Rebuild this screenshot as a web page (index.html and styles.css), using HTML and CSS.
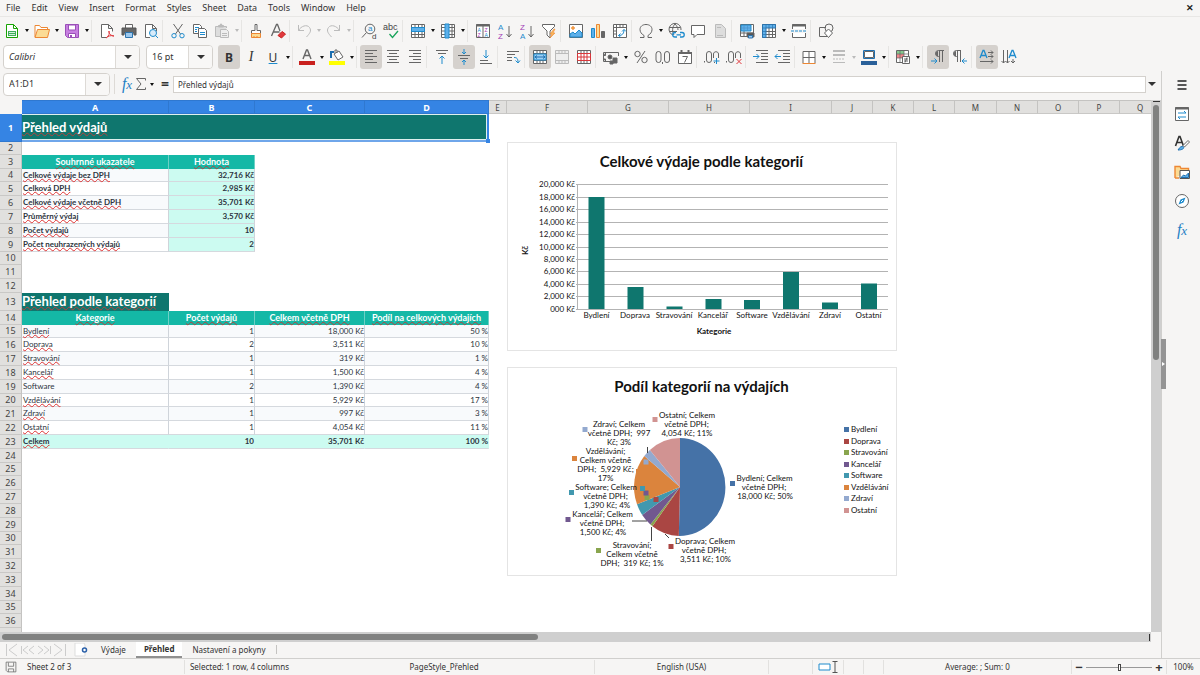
FILE: index.html
```html
<!DOCTYPE html>
<html lang="cs">
<head>
<meta charset="utf-8">
<title>Přehled výdajů</title>
<link rel="stylesheet" href="styles.css">
</head>
<body>
<nav class="menubar">
  <button>File</button><button>Edit</button><button>View</button><button>Insert</button><button>Format</button><button>Styles</button><button>Sheet</button><button>Data</button><button>Tools</button><button>Window</button><button>Help</button>
  <button class="close" aria-label="Close">✕</button>
</nav>

<div class="toolbar" role="toolbar" aria-label="Standard">
  <button class="tool" aria-label="New"><svg viewBox="0 0 16 16"><path d="M2.500 1.500h7l4 4v9h-11z" fill="#fff" stroke="#18a303"/><path d="M9.500 1.500v4h4" stroke="#18a303"/><path d="M4 8h8v5h-8z" fill="#3fae5c" stroke="none"/><path d="M5 9.500h6M5 11.500h6" stroke="#d5f0dc"/></svg></button><button class="drop" aria-label="New options"></button>
  <button class="tool" aria-label="Open"><svg viewBox="0 0 16 16"><path d="M1 14V2.500h4.500l1.500 2h6.500V7" fill="#fff" stroke="#ed8733"/><path d="M1 14.500 3.500 6.500h12l-2 8z" fill="#fbdb95" stroke="#ed8733"/></svg></button><button class="drop" aria-label="Open options"></button>
  <button class="tool" aria-label="Save"><svg viewBox="0 0 16 16"><path d="M1.500 1.500h13v13h-11l-2-2z" fill="#c77fe0" stroke="#9a4fb8"/><path d="M4.500 2h7v5h-7zM4.500 10.500h7v4h-7z" fill="#fff" stroke="#9a4fb8"/><path d="M6 12h2v2h-2z" fill="#9a4fb8" stroke="none"/></svg></button><button class="drop" aria-label="Save options"></button>
  <span class="sep"></span>
  <button class="tool" aria-label="Export as PDF"><svg viewBox="0 0 16 16"><path d="M7 14.500H2.500v-13h7l4 4v3M9.500 1.500v4h4" fill="#fff"/><path d="M7 15c3-2 4-5 3-7-1 2 2 5 5 5-3-1-6 0-8 2" stroke="#e0393e"/></svg></button>
  <button class="tool" aria-label="Print"><svg viewBox="0 0 16 16"><path d="M4.500 5V1.500h7V5" fill="#fff"/><path d="M1 5h14v7h-2v-2h-10v2h-2z" fill="#666" stroke="#555"/><path d="M4.500 9.500h7v5h-7z" fill="#9cc8ee" stroke="#2c73ac"/></svg></button>
  <button class="tool" aria-label="Print Preview"><svg viewBox="0 0 16 16"><path d="M7 14.500H2.500v-13h7l4 4v3M9.500 1.500v4h4" fill="#fff"/><circle cx="10" cy="10" r="3.500" fill="#d8ebfa" stroke="#1e8bcd"/><path d="M12.500 12.500 15 15" stroke="#1e8bcd"/></svg></button>
  <span class="sep"></span>
  <button class="tool" aria-label="Cut"><svg viewBox="0 0 16 16"><path d="M3.500 1 10.500 11M12.500 1 5.500 11"/><circle cx="4" cy="12.700" r="2.200" stroke="#1e8bcd"/><circle cx="12" cy="12.700" r="2.200" stroke="#1e8bcd"/></svg></button>
  <button class="tool" aria-label="Copy"><svg viewBox="0 0 16 16"><path d="M1.500 1.500h6l2 2v7h-8z" fill="#fff"/><path d="M6.500 5.500h6l2 2v7h-8z" fill="#fff"/><path d="M3 4.500h4M3 6.500h2M3 8.500h2M8 9.500h5M8 11.500h5" stroke="#1e8bcd"/></svg></button>
  <button class="tool off" aria-label="Paste"><svg viewBox="0 0 16 16"><path d="M12.500 5V3.500h-11v10h5" fill="#ddd"/><path d="M4.500 4V2.500h1.500l.5-1.500h1l.5 1.500h1.500V4z" fill="#bbb"/><path d="M6.500 6.500h6l2 2v6h-8zM8 10.500h5M8 12.500h5" fill="#eee"/></svg></button><button class="drop off" aria-label="Paste options"></button>
  <span class="sep tight"></span>
  <button class="tool" aria-label="Clone Formatting"><svg viewBox="0 0 16 16"><path d="M7 1.500h2v6h3.500v3h-9v-3H7z" fill="#fff"/><path d="M3.500 10.500h9v4h-9z" fill="#fbdb95" stroke="#ed8733"/><path d="M6 13v1.500M9 13v1.500" stroke="#ed8733"/></svg></button>
  <button class="tool" aria-label="Clear Direct Formatting"><svg viewBox="0 0 16 16"><path d="M1.500 13 6.500 1.500h1L10 8M3.500 9h6" stroke-width="1.300"/><path d="m8 12.500 4-4 3.500 2.500-4 4z" fill="#e0393e" stroke="#c9211e"/></svg></button>
  <span class="sep tight"></span>
  <button class="tool off" aria-label="Undo"><svg viewBox="0 0 16 16"><path d="M2.500 2v5.500H8M2.500 7.500C5 3 11 1 13.500 4.500s0 6-3 9.500"/></svg></button><button class="drop off" aria-label="Undo options"></button>
  <button class="tool off" aria-label="Redo"><svg viewBox="0 0 16 16"><path d="M13.500 2v5.500H8M13.500 7.500C11 3 5 1 2.500 4.500s0 6 3 9.500"/></svg></button><button class="drop off" aria-label="Redo options"></button>
  <span class="sep"></span>
  <button class="tool" aria-label="Find and Replace"><svg viewBox="0 0 16 16"><circle cx="9" cy="6" r="4.800"/><path d="M5.500 9.500 1 14.500"/><text x="7" y="8" class="g blue">a</text><text x="11" y="16" class="g">d</text></svg></button>
  <button class="tool" aria-label="Spelling"><svg viewBox="0 0 16 16"><text x="0" y="7" class="g abc">abc</text><path d="m6.500 11 3 3.500 5.500-6.500" stroke="#18a35a" stroke-width="1.300"/></svg></button>
  <span class="sep"></span>
  <button class="tool" aria-label="Row"><svg viewBox="0 0 16 16"><path d="M1.500 1.500h13v13h-13zM1.500 11.500h13M5 1.500v13M8.500 1.500v13M12 1.500v13" fill="#fff"/><path d="M1.500 4.500h13v4h-13z" fill="#5eb0ea" stroke="#1e8bcd"/></svg></button><button class="drop" aria-label="Row options"></button>
  <button class="tool" aria-label="Column"><svg viewBox="0 0 16 16"><path d="M1.500 1.500h13v13h-13zM1.500 4.500h13M1.500 8h13M1.500 11.500h13M12 1.500v13" fill="#fff"/><path d="M5 1h4v14H5z" fill="#5eb0ea" stroke="#1e8bcd"/></svg></button><button class="drop" aria-label="Column options"></button>
  <span class="sep"></span>
  <button class="tool" aria-label="Sort"><svg viewBox="0 0 16 16"><path d="M1.500 1.500h13v13h-13zM8 1.500v13" fill="#fff"/><path d="M1 2.500h14" stroke-width="2"/><text x="2.500" y="8.500" class="g tiny blue">A</text><text x="2.500" y="14" class="g tiny pink">Z</text><text x="9.500" y="8.500" class="g tiny pink">Z</text><text x="9.500" y="14" class="g tiny blue">A</text></svg></button>
  <button class="tool" aria-label="Sort Ascending"><svg viewBox="0 0 16 16"><text x="1" y="6.500" class="g az blue">A</text><text x="1" y="15.500" class="g az pink">Z</text><path d="M12 3v11M9.500 11l2.500 3 2.500-3"/></svg></button>
  <button class="tool" aria-label="Sort Descending"><svg viewBox="0 0 16 16"><text x="1" y="6.500" class="g az pink">Z</text><text x="1" y="15.500" class="g az blue">A</text><path d="M12 3v11M9.500 11l2.500 3 2.500-3"/></svg></button>
  <button class="tool" aria-label="AutoFilter"><svg viewBox="0 0 16 16"><path d="M1.500 1.500h12v2L9 8v7l-3-3V8L1.500 3.500z" fill="#fff"/><path d="M13 6 9 11h2l-2 4 5-5h-2l2-4z" fill="#fbb95a" stroke="#ed8733" stroke-width=".6"/></svg></button>
  <span class="sep"></span>
  <button class="tool" aria-label="Insert Image"><svg viewBox="0 0 16 16"><path d="M1.500 1.500h13v13h-13z" fill="#fff"/><path d="M2 14v-3l3-2 2 2 4-4 3 3v4z" fill="#5eb0ea" stroke="#1e8bcd"/><circle cx="5" cy="5" r="1.300" fill="#fbb95a" stroke="#ed8733"/></svg></button>
  <button class="tool" aria-label="Insert Chart"><svg viewBox="0 0 16 16"><path d="M1.500 5.500h3v9h-3z" fill="#5eb0ea" stroke="#1e8bcd"/><path d="M6.500 1.500h3v13h-3z" fill="#fbdb95" stroke="#ed8733"/><path d="M11.500 8.500h3v6h-3z" fill="#666"/></svg></button>
  <button class="tool" aria-label="Pivot Table"><svg viewBox="0 0 16 16"><path d="M1.500 1.500h13v13h-13zM1.500 4.500h13M4.500 1.500v13M8 1.500v3M11 1.500v3M1.500 8h3M1.500 11h3" fill="#fff"/><path d="M6.500 12.500c4 0 5.500-2 5.500-6M6.500 12.500l2-2M6.500 12.500l2 1.500M12 6.500l-2 2M12 6.500l2 2" stroke="#1e8bcd"/></svg></button>
  <span class="sep tight"></span>
  <button class="tool" aria-label="Special Character"><svg viewBox="0 0 16 16"><path d="M2 14.500h4v-2C3.500 11 2 9 2 6.500 2 3.500 4.500 1.500 8 1.500s6 2 6 5c0 2.500-1.500 4.500-4 6v2h4"/></svg></button><button class="drop" aria-label="Special Character options"></button>
  <button class="tool" aria-label="Hyperlink"><svg viewBox="0 0 16 16"><path d="M5 12A6 6 0 1 1 13 7M1 4.500h11.500M1 8.500h8M7 1C4 4 4 9 6 12M7 1c2 2 3 4 3 6"/><path d="M8 9.500h-1a2 2 0 0 0 0 4.500h2M12 9.500h2a2 2 0 0 1 0 4.500h-2M8.500 11.800h4.500" stroke="#1e8bcd" stroke-width="1.300"/></svg></button>
  <button class="tool" aria-label="Comment"><svg viewBox="0 0 16 16"><path d="M1.500 2.500h13v9H7l-3 3v-3H1.500z" fill="#fff"/></svg></button>
  <button class="tool off" aria-label="Headers and Footers"><svg viewBox="0 0 16 16"><path d="M3.500 1.500h6l4 4v9h-10z" fill="#ddd"/><path d="M5 4.500h4M5 12.500h6"/></svg></button>
  <span class="sep"></span>
  <button class="tool" aria-label="Define Print Area"><svg viewBox="0 0 16 16"><path d="M1.500 1.500h13v12h-13zM1.500 10h13M5 8v5.500" fill="#fff"/><path d="M2 2h10v6H2z" fill="#5eb0ea" stroke="#1e8bcd"/><path d="M5 2v6M8.500 2v6M2 5h10" stroke="#4a93cc" stroke-width=".7"/><path d="M8 10h7v4H8z" fill="#555"/><path d="M9.500 12.500h4v2.500h-4z" fill="#9cc8ee" stroke="#2c73ac"/></svg></button>
  <button class="tool" aria-label="Freeze Rows and Columns"><svg viewBox="0 0 16 16"><path d="M1.500 1.500h13v13h-13zM8 5v10M11.500 5v10M5 8.500h10M5 11.500h10" fill="#fff"/><path d="M1.500 5V1.500h13V5H5v9.500H1.500z" fill="#5eb0ea" stroke="#2c73ac"/><path d="M5 1.500V5M8 1.500V5M11.500 1.500V5M1.500 5H5M1.500 8.500H5M1.500 11.500H5" stroke="#2c73ac" stroke-width=".7"/></svg></button><button class="drop" aria-label="Freeze options"></button>
  <button class="tool" aria-label="Split Window"><svg viewBox="0 0 16 16"><path d="M1.500 6V1.500h13V6M1.500 10v4.500h13V10" fill="#fff"/><path d="M1 2.500h14" stroke-width="2"/><path d="M0 8h16" stroke="#1e8bcd" stroke-dasharray="3 1"/></svg></button>
  <span class="sep"></span>
  <button class="tool" aria-label="Show Draw Functions"><svg viewBox="0 0 16 16"><path d="M8 4.500H1.500v9H9"/><circle cx="11" cy="5" r="4"/><path d="m10.500 6 4 4-4 4.500-4-4.500z" fill="#fff"/></svg></button>
</div>

<div class="toolbar format" role="toolbar" aria-label="Formatting">
  <span class="combo font"><input aria-label="Font Name" value="Calibri"><button aria-label="Font list"></button></span>
  <span class="combo size"><input aria-label="Font Size" value="16 pt"><button aria-label="Size list"></button></span>
  <button class="tool on letter" aria-label="Bold"><b>B</b></button>
  <button class="tool letter" aria-label="Italic"><i>I</i></button>
  <button class="tool letter" aria-label="Underline"><u>U</u></button><button class="drop" aria-label="Underline options"></button>
  <span class="sep tight"></span>
  <button class="tool" aria-label="Font Color"><svg viewBox="0 0 16 16"><path d="M4 10 7.500 1h1L12 10M5.500 6.500h5" stroke-width="1.400"/><path d="M0 12h16v4H0z" fill="#c9211e" stroke="none"/></svg></button><button class="drop" aria-label="Font Color options"></button>
  <button class="tool" aria-label="Background Color"><svg viewBox="0 0 16 16"><path d="m5 5 5-3 4 6-5 3zM6 4V1h2v3" fill="#fff"/><path d="M2 9V3h3" stroke="#1e6fb0" stroke-width="2"/><path d="M0 12h16v4H0z" fill="#ff0" stroke="none"/></svg></button><button class="drop" aria-label="Background Color options"></button>
  <span class="sep tight"></span>
  <button class="tool on" aria-label="Align Left"><svg viewBox="0 0 16 16"><path d="M2 1.500h12M2 4.500h8M2 7.500h12M2 10.500h8M2 13.500h12"/></svg></button>
  <button class="tool" aria-label="Center Horizontally"><svg viewBox="0 0 16 16"><path d="M2 1.500h12M4 4.500h8M2 7.500h12M4 10.500h8M2 13.500h12"/></svg></button>
  <button class="tool" aria-label="Align Right"><svg viewBox="0 0 16 16"><path d="M2 1.500h12M6 4.500h8M2 7.500h12M6 10.500h8M2 13.500h12"/></svg></button>
  <span class="sep"></span>
  <button class="tool" aria-label="Align Top"><svg viewBox="0 0 16 16"><path d="M2 1.500h12M4 4.500h8"/><path d="M8 15V7M5.500 9.500 8 7l2.500 2.500" stroke="#1e8bcd"/></svg></button>
  <button class="tool on" aria-label="Center Vertically"><svg viewBox="0 0 16 16"><path d="M2 6.500h12M4 9.500h8"/><path d="M8 0v5M6 3l2 2 2-2M8 16v-5M6 13l2-2 2 2" stroke="#1e8bcd"/></svg></button>
  <button class="tool" aria-label="Align Bottom"><svg viewBox="0 0 16 16"><path d="M2 11.500h8M2 14.500h12"/><path d="M8 1v8M5.500 6.500 8 9l2.500-2.500" stroke="#1e8bcd"/></svg></button>
  <span class="sep"></span>
  <button class="tool" aria-label="Wrap Text"><svg viewBox="0 0 16 16"><path d="M2 2.500h12M2 5.500h8M2 8.500h5M2 11.500h5"/><path d="M9 8.500c3 0 4 1 4 5M10.500 11.500l2.500 2.500 2-2.500" stroke="#1e8bcd"/></svg></button>
  <span class="sep"></span>
  <button class="tool on" aria-label="Merge and Center Cells"><svg viewBox="0 0 16 16"><path d="M1.500 1.500h13v13h-13zM1.500 4.500h13M1.500 11.500h13M5 1.500v3M8 1.500v3M11 1.500v3M5 11.500v3M8 11.500v3M11 11.500v3" fill="#fff"/><path d="M2 5h12v6H2z" fill="#9cd0f5" stroke="#1e8bcd"/><path d="M3 8h10M5 6.500 3 8l2 1.500M11 6.500 13 8l-2 1.500" stroke="#1e6fb0"/></svg></button>
  <button class="tool off" aria-label="Merge Cells"><svg viewBox="0 0 16 16"><path d="M1.500 1.500h13v13h-13zM1.500 4.500h13M1.500 11.500h13M5 1.500v3M8 1.500v3M11 1.500v3M5 11.500v3M8 11.500v3M11 11.500v3" fill="#eee"/></svg></button>
  <button class="tool" aria-label="Unmerge Cells"><svg viewBox="0 0 16 16"><path d="M1.500 1.500h13v13h-13zM5 1.500v3M8 1.500v3M11 1.500v3M5 11.500v3M8 11.500v3M11 11.500v3" fill="#fff"/><path d="M1.500 4.500h13v7h-13zM1.500 8h13M5 4.500v7M8 4.500v7M11 4.500v7" stroke="#d8373b"/></svg></button>
  <span class="sep"></span>
  <button class="tool" aria-label="Format as Currency"><svg viewBox="0 0 16 16"><path d="M8 12.500H.5v-9h15V7"/><circle cx="7" cy="8" r="2" fill="#555"/><path d="M.5 6.500h2v-3M.5 10h2v2.500M10 9h4v5h-4zM7 12h3v3H7z" fill="#666"/></svg></button><button class="drop" aria-label="Currency options"></button>
  <button class="tool" aria-label="Format as Percent"><svg viewBox="0 0 16 16"><circle cx="4.500" cy="5" r="2.700"/><circle cx="11.500" cy="11" r="2.700"/><path d="m12 2-8 12"/></svg></button>
  <button class="tool" aria-label="Format as Number"><svg viewBox="0 0 16 16"><rect x="1" y="2.500" width="5" height="11" rx="2.500"/><path d="M7.500 13v2"/><rect x="9.500" y="2.500" width="5" height="11" rx="2.500"/></svg></button>
  <button class="tool" aria-label="Format as Date"><svg viewBox="0 0 16 16"><path d="M1.500 3.500h13v11h-13z" fill="#fff"/><path d="M1 4h14M4.500 1v3M11.500 1v3" stroke-width="2"/><path d="M5.500 7.500h5l-3 6"/></svg></button>
  <span class="sep"></span>
  <button class="tool" aria-label="Add Decimal Place"><svg viewBox="0 0 16 16"><path d="M.5 12v1.500M10.500 13v1"/><rect x="2.500" y="2.500" width="5" height="11" rx="2.500"/><path d="M9.500 9V5c0-3 5-3 5 0v4"/><path d="M12.500 9v6M9.500 12h6" stroke="#1e8bcd"/></svg></button>
  <button class="tool" aria-label="Delete Decimal Place"><svg viewBox="0 0 16 16"><path d="M.5 12v1.500"/><rect x="2.500" y="2.500" width="5" height="11" rx="2.500"/><path d="M9.500 9V5c0-3 5-3 5 0v4"/><path d="m10.500 10 5 5M15.500 10l-5 5" stroke="#e0393e"/></svg></button>
  <span class="sep"></span>
  <button class="tool" aria-label="Increase Indent"><svg viewBox="0 0 16 16"><path d="M3 1.500h12M8 4.500h7M8 7.500h7M8 10.500h7M3 13.500h12"/><path d="M0 7.500h6M3.500 5 6 7.500 3.500 10" stroke="#1e8bcd"/></svg></button>
  <button class="tool" aria-label="Decrease Indent"><svg viewBox="0 0 16 16"><path d="M3 1.500h12M8 4.500h7M8 7.500h7M8 10.500h7M3 13.500h12"/><path d="M6 7.500H0M2.500 5 0 7.500 2.500 10" stroke="#1e8bcd"/></svg></button>
  <span class="sep tight"></span>
  <button class="tool" aria-label="Borders"><svg viewBox="0 0 16 16"><path d="M2 14V2.500h12V14M8 2.500V14M2 8.500h12" fill="#fff"/><path d="M1.500 14.500h13" stroke="#ed8733"/></svg></button><button class="drop" aria-label="Borders options"></button>
  <button class="tool off" aria-label="Border Style"><svg viewBox="0 0 16 16"><path d="M2 2h12M2 6h12" stroke-width="2"/><path d="M2 10h12" stroke-dasharray="2 1"/><path d="M2 13.500h12"/></svg></button><button class="drop off" aria-label="Border Style options"></button>
  <button class="tool" aria-label="Border Color"><svg viewBox="0 0 16 16"><path d="M2.500 1.500h11v8h-11z" fill="#fff" stroke="#1e6fb0"/><path d="M3.500 2.500h9v6h-9z"/><path d="M0 12h16v4H0z" fill="#2a6099" stroke="none"/></svg></button><button class="drop" aria-label="Border Color options"></button>
  <span class="sep tight"></span>
  <button class="tool" aria-label="Conditional Formatting"><svg viewBox="0 0 16 16"><path d="M1.500 1.500h12v12h-12z" fill="#fff"/><path d="M2 2h7v3H2z" fill="#86c98e" stroke="none"/><path d="M2 5h7v4H2z" fill="#f0868a" stroke="none"/><path d="M1.500 5h12M1.500 9h12M5 1.500v12M9 1.500v12" stroke-width=".7"/><path d="M7.500 7.500h7v7h-7zM9 10h4M9 12h4M12 8.500l-2 5" fill="#fff"/></svg></button><button class="drop" aria-label="Conditional options"></button>
  <span class="sep"></span>
  <button class="tool on" aria-label="Left-To-Right"><svg viewBox="0 0 16 16"><path d="M14 1.500H8.500a3 3 0 0 0 0 6H9M9.500 1.500V13M12.500 1.500V13"/><path d="M7.500 2.500c-2 1-2 3.500 0 4.500z" fill="#666"/><path d="M1 12h6M4.500 9.500 7 12l-2.500 2.500" stroke="#1e8bcd"/></svg></button>
  <button class="tool" aria-label="Right-To-Left"><svg viewBox="0 0 16 16"><path d="M9 1.500H4.500a3 3 0 0 0 0 6H5M5.500 1.500V13M8.500 1.500V13"/><path d="M3.500 2.500c-2 1-2 3.500 0 4.500z" fill="#666"/><path d="M15 12h-5M12.500 9.500 10 12l2.500 2.500" stroke="#1e8bcd"/></svg></button>
  <span class="sep"></span>
  <button class="tool on" aria-label="Text from left to right"><svg viewBox="0 0 16 16"><path d="M1 9 4 1.500h1L8 9M2.500 6.500h4" stroke="#1e8bcd" stroke-width="1.300"/><path d="M9 3.500h5M9 7.500h5M1 12.500h13M12 1.500l2 2-2 2M12 5.500l2 2-2 2M12 10.500l2 2-2 2"/></svg></button>
  <button class="tool" aria-label="Text from top to bottom"><svg viewBox="0 0 16 16"><path d="M8 9l3-7.500h1L15 9M9.500 6.500h4" stroke="#1e8bcd" stroke-width="1.300"/><path d="M2.500 1v13M6.500 1v13M12 10v4M.5 12l2 2 2-2M4.500 12l2 2 2-2M10 12l2 2 2-2"/></svg></button>
</div>

<main class="work">
  <div class="doc">
    <div class="formulabar">
      <span class="combo name"><input aria-label="Name Box" value="A1:D1"><button aria-label="Name list"></button></span>
      <span class="rule"></span>
      <button class="fn" aria-label="Function Wizard"><i>f</i>x</button>
      <button class="sum" aria-label="Select Function"><svg viewBox="0 0 12 14"><path d="M10.500 3.500v-2h-9L6 7l-4.500 5.500h9v-2"/></svg></button><button class="drop" aria-label="Function options"></button>
      <button class="eq" aria-label="Formula">=</button>
      <input class="line" aria-label="Input line" value="Přehled výdajů">
      <button class="expand" aria-label="Expand Formula Bar"></button>
    </div>

    <div class="gridrow">
      <div class="sheet">
        <table class="cells">
          <colgroup><col class="wn"><col class="wa"><col class="wb"><col class="wc"><col class="wd"><col class="we"><col class="wf"><col class="wf"><col class="wf"><col class="wi"><col class="wj"><col class="wj"><col class="wj"><col class="wm"><col class="wj"><col class="wj"><col class="wj"><col class="wj"></colgroup>
          <thead><tr><td class="corner"></td><th class="sel">A</th><th class="sel">B</th><th class="sel">C</th><th class="sel">D</th><th>E</th><th>F</th><th>G</th><th>H</th><th>I</th><th>J</th><th>K</th><th>L</th><th>M</th><th>N</th><th>O</th><th>P</th><th>Q</th></tr></thead>
          <tbody>
            <tr class="title"><th class="sel">1</th><td colspan="4" class="dark"><span class="sp">Přehled výdajů</span></td><td colspan="13"></td></tr>
            <tr class="short"><th>2</th><td colspan="17"></td></tr>
            <tr><th>3</th><td class="head"><span class="sp">Souhrnné ukazatele</span></td><td class="head"><span class="sp">Hodnota</span></td><td colspan="15"></td></tr>
            <tr class="short strong alt"><th>4</th><td class="c"><span class="sp">Celkové výdaje bez DPH</span></td><td class="c n mint">32,716 Kč</td><td colspan="15"></td></tr>
            <tr class="strong"><th>5</th><td class="c"><span class="sp">Celková DPH</span></td><td class="c n mint">2,985 Kč</td><td colspan="15"></td></tr>
            <tr class="strong alt"><th>6</th><td class="c"><span class="sp">Celkové výdaje včetně DPH</span></td><td class="c n mint">35,701 Kč</td><td colspan="15"></td></tr>
            <tr class="strong"><th>7</th><td class="c"><span class="sp">Průměrný výdaj</span></td><td class="c n mint">3,570 Kč</td><td colspan="15"></td></tr>
            <tr class="strong alt"><th>8</th><td class="c"><span class="sp">Počet výdajů</span></td><td class="c n mint">10</td><td colspan="15"></td></tr>
            <tr class="strong"><th>9</th><td class="c"><span class="sp">Počet neuhrazených výdajů</span></td><td class="c n mint">2</td><td colspan="15"></td></tr>
            <tr class="short"><th>10</th><td colspan="17"></td></tr>
            <tr><th>11</th><td colspan="17"></td></tr>
            <tr><th>12</th><td colspan="17"></td></tr>
            <tr class="subtitle"><th>13</th><td class="dark"><span class="sp">Přehled podle kategorií</span></td><td colspan="16"></td></tr>
            <tr><th>14</th><td class="head"><span class="sp">Kategorie</span></td><td class="head"><span class="sp">Počet výdajů</span></td><td class="head"><span class="sp">Celkem včetně DPH</span></td><td class="head"><span class="sp">Podíl na celkových výdajích</span></td><td colspan="13"></td></tr>
            <tr class="short alt"><th>15</th><td class="c"><span class="sp">Bydlení</span></td><td class="c n">1</td><td class="c n">18,000 Kč</td><td class="c n">50 %</td><td colspan="13"></td></tr>
            <tr><th>16</th><td class="c"><span class="sp">Doprava</span></td><td class="c n">2</td><td class="c n">3,511 Kč</td><td class="c n">10 %</td><td colspan="13"></td></tr>
            <tr class="alt"><th>17</th><td class="c"><span class="sp">Stravování</span></td><td class="c n">1</td><td class="c n">319 Kč</td><td class="c n">1 %</td><td colspan="13"></td></tr>
            <tr><th>18</th><td class="c"><span class="sp">Kancelář</span></td><td class="c n">1</td><td class="c n">1,500 Kč</td><td class="c n">4 %</td><td colspan="13"></td></tr>
            <tr class="alt"><th>19</th><td class="c">Software</td><td class="c n">2</td><td class="c n">1,390 Kč</td><td class="c n">4 %</td><td colspan="13"></td></tr>
            <tr class="short"><th>20</th><td class="c"><span class="sp">Vzdělávání</span></td><td class="c n">1</td><td class="c n">5,929 Kč</td><td class="c n">17 %</td><td colspan="13"></td></tr>
            <tr class="alt"><th>21</th><td class="c"><span class="sp">Zdraví</span></td><td class="c n">1</td><td class="c n">997 Kč</td><td class="c n">3 %</td><td colspan="13"></td></tr>
            <tr><th>22</th><td class="c"><span class="sp">Ostatní</span></td><td class="c n">1</td><td class="c n">4,054 Kč</td><td class="c n">11 %</td><td colspan="13"></td></tr>
            <tr class="strong total"><th>23</th><td class="c"><span class="sp">Celkem</span></td><td class="c n">10</td><td class="c n">35,701 Kč</td><td class="c n">100 %</td><td colspan="13"></td></tr>
            <tr><th>24</th><td colspan="17"></td></tr>
            <tr class="short"><th>25</th><td colspan="17"></td></tr>
            <tr><th>26</th><td colspan="17"></td></tr>
            <tr><th>27</th><td colspan="17"></td></tr>
            <tr><th>28</th><td colspan="17"></td></tr>
            <tr><th>29</th><td colspan="17"></td></tr>
            <tr class="short"><th>30</th><td colspan="17"></td></tr>
            <tr><th>31</th><td colspan="17"></td></tr>
            <tr><th>32</th><td colspan="17"></td></tr>
            <tr><th>33</th><td colspan="17"></td></tr>
            <tr><th>34</th><td colspan="17"></td></tr>
            <tr class="short"><th>35</th><td colspan="17"></td></tr>
            <tr><th>36</th><td colspan="17"></td></tr>
            <tr><th></th><td colspan="17"></td></tr>
          </tbody>
        </table>
        <div class="selection"></div>

        <svg class="chart bars" viewBox="507 142 390 209" role="img" aria-label="Celkové výdaje podle kategorií">
          <text class="ct" x="701.500" y="167">Celkové výdaje podle kategorií</text>
          <path class="gl" d="M576 184.500h312M576 197.500h312M576 209.500h312M576 222.500h312M576 234.500h312M576 247.500h312M576 259.500h312M576 271.500h312M576 284.500h312M576 296.500h312M576 309.500h312M577.500 184v125"/>
          <path class="bar" d="M588.500 197h16v112h-16zM627.500 287h16v22h-16zM666.500 306.500h16v2.500h-16zM705.500 299h16v10h-16zM744 300h16v9h-16zM783 272h16v37h-16zM822 302.500h16v6.500h-16zM861 283.500h16v25.500h-16z"/>
          <g class="yl"><text x="575" y="187">20,000 Kč</text><text x="575" y="200">18,000 Kč</text><text x="575" y="212">16,000 Kč</text><text x="575" y="225">14,000 Kč</text><text x="575" y="237">12,000 Kč</text><text x="575" y="250">10,000 Kč</text><text x="575" y="262">8,000 Kč</text><text x="575" y="274">6,000 Kč</text><text x="575" y="287">4,000 Kč</text><text x="575" y="299">2,000 Kč</text><text x="575" y="312">000 Kč</text></g>
          <g class="xl"><text x="596.500" y="318">Bydlení</text><text x="635" y="318">Doprava</text><text x="674" y="318">Stravování</text><text x="713" y="318">Kancelář</text><text x="752" y="318">Software</text><text x="791" y="318">Vzdělávání</text><text x="830" y="318">Zdraví</text><text x="868.500" y="318">Ostatní</text></g>
          <g class="xl ax"><text x="714" y="334">Kategorie</text><text transform="translate(528 250.500) rotate(-90)">Kč</text></g>
        </svg>

        <svg class="chart pie" viewBox="507 367 390 209" role="img" aria-label="Podíl kategorií na výdajích">
          <text class="ct" x="701.500" y="392">Podíl kategorií na výdajích</text>
          <path d="M680 487V438A46 49 0 1 1 678.800 536z" fill="#4572a7"/>
          <path d="M680 487 678.800 536A46 49 0 0 1 652.400 526.200z" fill="#aa4643"/>
          <path d="M680 487 652.400 526.200A46 49 0 0 1 650.400 524.500z" fill="#89a54e"/>
          <path d="M680 487 650.400 524.500A46 49 0 0 1 642.200 514.900z" fill="#71588f"/>
          <path d="M680 487 642.200 514.900A46 49 0 0 1 637 504.300z" fill="#4198af"/>
          <path d="M680 487 637 504.300A46 49 0 0 1 644.300 456.100z" fill="#db843d"/>
          <path d="M680 487 644.300 456.100A46 49 0 0 1 649.900 450z" fill="#93a9cf"/>
          <path d="M680 487 649.900 450A46 49 0 0 1 680 438z" fill="#d19392"/>
          <path class="ld" d="M632 521h15M651.500 527v14M647.500 447v6M665 534l4 4"/>
          <path d="M730 481h5v5h-5zM844 427h5v5h-5z" fill="#4572a7"/>
          <path d="M668.500 544h5v5h-5zM653.500 497h5v5h-5zM844 439h5v5h-5z" fill="#aa4643"/>
          <path d="M596 548h5v5h-5zM644.500 495h5v5h-5zM844 450h5v5h-5z" fill="#89a54e"/>
          <path d="M565.500 517h5v5h-5zM643.500 490.500h5v5h-5zM844 462h5v5h-5z" fill="#71588f"/>
          <path d="M569 490h5v5h-5zM640 486h5v5h-5zM844 473h5v5h-5z" fill="#4198af"/>
          <path d="M572 456h5v5h-5zM636 469h4v5h-4zM844 485h5v5h-5z" fill="#db843d"/>
          <path d="M582.500 427h5v5h-5zM643.500 459.500h5v5h-5zM844 496h5v5h-5z" fill="#93a9cf"/>
          <path d="M652.500 417h5v5h-5zM844 508h5v5h-5z" fill="#d19392"/>
          <g class="xl">
            <text x="764.500" y="481">Bydlení; Celkem</text><text x="764" y="490">včetně DPH;</text><text x="765" y="499">18,000 Kč; 50%</text>
            <text x="705" y="544">Doprava; Celkem</text><text x="704" y="553">včetně DPH;</text><text x="705.500" y="562">3,511 Kč; 10%</text>
            <text x="632" y="548">Stravování;</text><text x="632" y="557">Celkem včetně</text><text x="632" y="566">DPH;&#160; 319 Kč; 1%</text>
            <text x="602.500" y="517">Kancelář; Celkem</text><text x="602" y="526">včetně DPH;</text><text x="603" y="535">1,500 Kč; 4%</text>
            <text x="606" y="490">Software; Celkem</text><text x="605.500" y="499">včetně DPH;</text><text x="607" y="508">1,390 Kč; 4%</text>
            <text x="605.500" y="454">Vzdělávání;</text><text x="605.500" y="463">Celkem včetně</text><text x="605.500" y="472">DPH;&#160; 5,929 Kč;</text><text x="605.500" y="481">17%</text>
            <text x="619" y="427">Zdraví; Celkem</text><text x="619" y="436">včetně DPH;&#160; 997</text><text x="619" y="445">Kč; 3%</text>
            <text x="687" y="418">Ostatní; Celkem</text><text x="686.500" y="427">včetně DPH;</text><text x="687" y="436">4,054 Kč; 11%</text>
          </g>
          <g class="ll"><text x="851" y="432">Bydlení</text><text x="851" y="444">Doprava</text><text x="851" y="455">Stravování</text><text x="851" y="467">Kancelář</text><text x="851" y="478">Software</text><text x="851" y="490">Vzdělávání</text><text x="851" y="501">Zdraví</text><text x="851" y="513">Ostatní</text></g>
        </svg>
      </div>
      <div class="vscroll"><span class="cap"></span><span class="thumb"></span></div>
    </div>
    <div class="hscroll"><div class="track"><span class="thumb"></span><span class="cap"></span></div></div>

    <div class="tabs">
      <svg class="nav" viewBox="0 0 60 14"><path d="M.500 1v12M11 1 3 7l8 6M15.500 3v8M22 3l-5 4 5 4M28 3l-5 4 5 4M32 3l5 4-5 4M38 3l5 4-5 4M44.500 3v8M48 1l8 6-8 6M59.500 1v12"/></svg>
      <button class="add" aria-label="Add Sheet"><svg viewBox="0 0 14 14"><path d="M1 0h9l1 2v11H1z" fill="#fff" stroke="#ddd"/><circle cx="10.500" cy="7" r="2" fill="#fff" stroke="#2a60a9" stroke-width="1.500"/></svg></button>
      <button class="tab">Výdaje</button><button class="tab active">Přehled</button><button class="tab last">Nastavení a pokyny</button>
    </div>
  </div>

  <aside class="sidebar">
    <button aria-label="Sidebar Settings"><svg viewBox="0 0 16 16"><path d="M3.500 4h9M3.500 8h9M3.500 12h9" stroke="#222" stroke-width="1.500"/></svg></button>
    <button aria-label="Properties"><svg viewBox="0 0 16 16"><path d="M1.500 1.500h13v13h-13z" fill="#fff"/><path d="M1 2.500h14" stroke-width="2"/><path d="M4 7h8M4 11h8M12 7l-2-2M4 11l2 2" stroke="#1e8bcd"/></svg></button>
    <button aria-label="Styles"><svg viewBox="0 0 16 16"><path d="M1.500 11 5 1.500h1L9.500 11M3 7.500h5" stroke="#333" stroke-width="1.600"/><path d="m9 10.500 5-5 1.500 1.500-5 5z" fill="#fff"/><path d="M4 15c1-1 2-4 4.500-3.500S10 15 4 15z" fill="#5eb0ea" stroke="#1e6fb0"/></svg></button>
    <button aria-label="Gallery"><svg viewBox="0 0 16 16"><path d="M1 14V2.500h5l1 2h7.500V7M1 14h4" fill="#fbdb95" stroke="#ed8733" stroke-width="1.400"/><path d="M6 6.500h9.500v8H6z" fill="#fff" stroke="#555"/><path d="M7 13.500 9.500 11l2 1 3-3v4.500z" fill="#5eb0ea" stroke="#1e6fb0"/></svg></button>
    <button aria-label="Navigator"><svg viewBox="0 0 16 16"><circle cx="8" cy="8" r="6.500" fill="#fff"/><path d="m11.500 4.500-2 5-5 2 2-5z" fill="#1e8bcd" stroke="none"/><path d="m9 7-2 2" stroke="#fff"/></svg></button>
    <button class="fn" aria-label="Functions"><i>f</i>x</button>
    <span class="grip"></span>
  </aside>
</main>

<footer class="status">
  <span class="st"><svg viewBox="0 0 16 16"><path d="M1.500 1.500h13v13h-11l-2-2zM4.500 2v5h7V2M4.500 14.500v-4h7v4"/></svg></span>
  <span class="st left">Sheet 2 of 3</span>
  <span class="st bar">Selected: 1 row, 4 columns</span>
  <span class="st">PageStyle_Přehled</span>
  <span class="st bar">English (USA)</span>
  <span class="st bar"></span>
  <span class="st bar mode"><svg viewBox="0 0 20 12"><path d="M1 3h11v6H1z" fill="#fff" stroke="#1e8bcd"/><path d="M14.500.5h5M17 .5v11M14.500 11.500h5" stroke="#555"/></svg></span>
  <span class="st bar"></span>
  <span class="st bar"></span>
  <span class="st bar">Average: ; Sum: 0</span>
  <span class="st bar zoom"><button aria-label="Zoom Out">−</button><input type="range" aria-label="Zoom" min="0" max="100" value="50"><button aria-label="Zoom In">+</button></span>
  <span class="st bar">100%</span>
</footer>
</body>
</html>
```
FILE: styles.css
```css
* { box-sizing: border-box; }
body {
  margin: 0;
  height: 100vh;
  display: flex;
  flex-direction: column;
  overflow: hidden;
  background: #f6f5f4;
  color: #333;
  font: 9px/12px "Noto Sans", "Open Sans", sans-serif;
}
button, input {
  margin: 0;
  padding: 0;
  border: 0;
  background: none;
  color: inherit;
  font: inherit;
}
svg { display: block; fill: none; stroke: #666; }
text { stroke: none; }

.menubar {
  display: flex;
  align-items: center;
  gap: 11px;
  height: 17px;
  padding: 0 6px;
  border-bottom: 1px solid #e8e7e5;
}
.close { margin-left: auto; font-weight: bold; color: #222; }

.toolbar { display: flex; align-items: center; height: 27px; padding-left: 1px; }
.toolbar.format { padding: 0 0 1px 3px; }
.tool {
  display: flex;
  flex: none;
  align-items: center;
  justify-content: center;
  width: 22px;
  height: 24px;
  border-radius: 3px;
}
.tool svg { width: 16px; height: 16px; overflow: visible; }
.tool.on { background: #d5d1cd; }
.off svg { stroke: #bbb; }
.drop { display: flex; flex: none; justify-content: center; width: 8px; }
.drop::after,
.combo button::after,
.expand::after {
  content: "";
  border: 2px solid transparent;
  border-top: 3px solid #111;
  border-bottom: 0;
}
.drop.off::after { border-top-color: #bbb; }
.sep { flex: none; width: 5px; height: 22px; border-left: 1px solid #e6e5e3; }
.sep.tight { width: 4px; }
.g { font: 8px "Liberation Sans", sans-serif; fill: #444; }
.g.abc { font-size: 9px; }
.g.az { font-size: 8px; }
.g.tiny { font-size: 5px; }
.g.blue { fill: #1e8bcd; }
.g.pink { fill: #a33ab5; }
.letter { font: 12px "Noto Sans", sans-serif; }
.letter i { font-family: "Liberation Serif", serif; font-size: 14px; }
.letter u { text-decoration-color: #1e8bcd; text-decoration-thickness: 1px; }

.combo {
  display: flex;
  flex: none;
  height: 24px;
  border: 1px solid #d4d1cd;
  border-radius: 4px;
  background: #fff;
  overflow: hidden;
}
.combo input { flex: 1; min-width: 0; padding-left: 5px; }
.combo button {
  display: flex;
  align-items: center;
  justify-content: center;
  width: 24px;
  border-left: 1px solid #dddad6;
  background: #f8f7f6;
}
.combo button::after, .expand::after { border-width: 4px 4px 0; border-top-color: #333; }
.font { width: 137px; margin-right: 6px; font-style: italic; }
.size { width: 67px; margin-right: 5px; }
.name { width: 107px; }

.work { flex: 1; display: flex; min-height: 0; }
.doc { flex: 1; display: flex; flex-direction: column; min-width: 0; }
.formulabar { display: flex; align-items: center; height: 29px; padding: 0 4px 3px 3px; }
.formulabar .combo { height: 23px; }
.rule { width: 1px; height: 20px; margin: 0 4px; background: #dddad6; }
.fn { width: 16px; color: #1e7fc4; font: italic 13px/16px "Liberation Serif", serif; }
.fn i { font-size: 16px; }
.sum { width: 12px; }
.sum svg { width: 12px; height: 14px; }
.eq { width: 16px; font-size: 14px; font-weight: bold; }
.line {
  flex: 1;
  min-width: 0;
  height: 17px;
  padding-left: 4px;
  border: 1px solid #d4d1cd;
  background: #fff;
  font-size: 8px;
}
.formulabar .drop { width: 10px; }
.expand { display: flex; justify-content: center; width: 11px; }

.gridrow { flex: 1; display: flex; min-height: 0; }
.sheet { position: relative; flex: 1; min-width: 0; overflow: hidden; background: #fff; }
.cells { table-layout: fixed; width: 0; border-collapse: separate; border-spacing: 0; font: 8px/11px Lato, sans-serif; color: #2d3440; }
.wn { width: 22px; } .wa { width: 147px; } .wb { width: 86px; } .wc { width: 110px; } .wd { width: 124px; }
.we { width: 18px; } .wf { width: 81px; } .wi { width: 82px; } .wj { width: 41px; } .wm { width: 42px; }
.cells tr { height: 14px; }
.cells tr.short { height: 13px; }
.cells tr.title { height: 28px; }
.cells tr.subtitle { height: 18px; }
.cells td, .cells th { padding: 0; white-space: nowrap; }
.cells th {
  background: #e1e0de;
  border-right: 1px solid #c4c3c1;
  border-bottom: 1px solid #c9c8c6;
  color: #444;
  font: 9px/12px "Noto Sans", sans-serif;
}
.cells thead th { font-size: 8px; border-top: 1px solid #c4c3c1; line-height: 11px; }
.cells th.sel { background: #3584e4; border-color: #2f78d0; color: #fff; font-weight: bold; }
.cells thead th.sel { font-size: 9px; }
.cells .corner { background: #f6f5f4; }
.dark { background: #0f766e; color: #fff; font-weight: bold; font-size: 13px; line-height: 16px; }
.cells .title .dark { padding-bottom: 3px; }
.cells .subtitle .dark { padding-bottom: 2px; }
.head {
  background: #14b8a6;
  border-right: 1px solid #6dd0c5;
  color: #fff;
  font-size: 9px;
  font-weight: bold;
  text-align: center;
}
.cells .head { padding-bottom: 1px; }
.c { border-right: 1px solid #cfd4da; border-bottom: 1px solid #d5d9de; }
.cells .c { padding-left: 1px; }
.cells .n { text-align: right; }
.alt .c { background: #f8fafc; }
.strong .c { font-weight: bold; }
.cells .mint, .total .c { background: #ccfbf1; }
.total .c { border-right-color: #ccfbf1; }
.sp { text-decoration: underline wavy #d33 1px; text-underline-offset: 0; text-decoration-skip-ink: none; }
.dark .sp, .head .sp { text-decoration-color: #b5413c; }
.selection {
  position: absolute;
  left: 22px;
  top: 14px;
  width: 467px;
  height: 28px;
  border-right: 2px solid #3584e4;
  border-bottom: 2px solid #6fa6ea;
  box-shadow: inset 0 1px #dff0ee, inset -1px -1px #dff0ee;
}
.selection::after {
  content: "";
  position: absolute;
  right: -3px;
  bottom: -3px;
  width: 4px;
  height: 4px;
  background: #3584e4;
}
.chart {
  position: absolute;
  left: 507px;
  width: 390px;
  height: 209px;
  background: #fff;
  outline: 1px solid #e4e4e4;
  outline-offset: -1px;
  font: 8px Lato, sans-serif;
}
.chart text { fill: #111; }
.chart path { stroke: none; }
.bars { top: 42px; }
.pie { top: 267px; }
.chart .ct { font-size: 15px; font-weight: bold; text-anchor: middle; }
.chart .gl { stroke: #b3b3b3; }
.chart .ld { stroke: #444; }
.bar { fill: #0f766e; }
.yl { text-anchor: end; }
.xl { text-anchor: middle; }
.ax { font-weight: bold; }

.vscroll { width: 10px; display: flex; flex-direction: column; align-items: center; background: #cfcfcf; }
.vscroll .cap { width: 7px; height: 1px; margin: 1px 0 3px; background: #333; }
.vscroll .thumb { width: 6px; height: 48%; border-radius: 3px; background: #808180; }
.hscroll { padding-right: 10px; }
.track { display: flex; align-items: center; justify-content: space-between; height: 10px; padding: 0 1px 0 2px; background: #cfcfcf; }
.hscroll .thumb { width: 46.7%; height: 6px; border-radius: 3px; background: #808180; }
.hscroll .cap { width: 1px; height: 7px; background: #333; }

.tabs { display: flex; align-items: center; height: 16px; padding-left: 6px; font-size: 8px; }
.nav { width: 60px; height: 14px; stroke: #ccc; }
.add { width: 14px; margin: 0 3px 0 8px; }
.add svg { width: 14px; height: 14px; }
.tab { height: 16px; padding: 0 10px; border-bottom: 1px solid transparent; }
.tab.active { padding: 0 8px; background: #fff; border-bottom: 2px solid #909090; font-weight: bold; }
.tab.last { position: relative; padding-right: 11px; }
.tab.last::after { content: ""; position: absolute; right: 0; top: 3px; height: 9px; border-right: 1px solid #c4c3c1; }

.sidebar {
  position: relative;
  display: flex;
  flex-direction: column;
  gap: 13px;
  width: 39px;
  padding: 6px 0 0 12px;
  border-left: 1px solid #d0cfcd;
}
.sidebar button { width: 16px; height: 16px; }
.sidebar svg { width: 16px; height: 16px; }
.grip { position: absolute; left: -1px; top: 268px; width: 5px; height: 50px; background: #949494; }
.grip::after {
  content: "";
  position: absolute;
  left: 1px;
  top: 23px;
  border: 2px solid transparent;
  border-left: 3px solid #fff;
  border-right: 0;
}

.status {
  display: grid;
  grid-template-columns: 22px 162fr 110fr 300fr 174fr 44fr 31px 20px 20px 188fr 95px 34px;
  height: 17px;
  padding: 1px 0;
  border-top: 1px solid #d0cfcd;
  font-size: 8px;
}
.st { display: flex; align-items: center; justify-content: center; white-space: nowrap; }
.st.left { justify-content: start; padding-left: 5px; }
.st.bar { border-left: 1px solid #e2e1df; }
.st svg { width: 12px; height: 12px; }
.st.mode svg { width: 20px; }
.zoom { gap: 2px; }
.zoom button { width: 10px; font-size: 13px; font-weight: bold; line-height: 12px; }
.zoom input { appearance: none; width: 66px; height: 12px; background: linear-gradient(#999, #999) center / 100% 1px no-repeat; }
.zoom input::-webkit-slider-thumb { appearance: none; width: 3px; height: 7px; border: 1px solid #444; background: #fff; }
```
